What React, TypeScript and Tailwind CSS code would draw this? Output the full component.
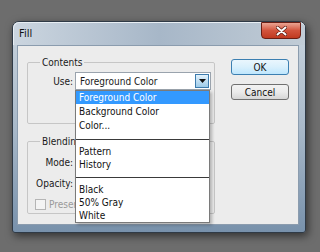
import React from "react";

const font = "font-['DejaVu_Sans_Condensed','DejaVu_Sans','Liberation_Sans',sans-serif] font-stretch-condensed";

function Separator({ mt, h }: { mt: string; h: string }) {
  return (
    <div className={`${h} w-full`}>
      <div className={`${mt} h-px w-full bg-[#3a3a3a]`} />
    </div>
  );
}

export default function App() {
  const items1 = ["Background Color", "Color..."];
  return (
    <div className={`w-[320px] h-[252px] bg-[#6d6d6d] overflow-hidden pt-[21px] pl-[12px] ${font}`}>
      <div className="relative w-[294px] h-[212px] rounded-t-[7px] rounded-b-[3px] border border-[#2f3a46] bg-gradient-to-b from-[#c9d4de] via-[#a9b9c9] to-[#7891ab] shadow-[2px_3px_8px_rgba(0,0,0,0.55)] flex flex-col">
        {/* title bar */}
        <div className="h-[23px] flex items-start bg-gradient-to-r from-[#cbd5df] via-[#a7b7c8] to-[#c1ccd6] rounded-t-[6px] border-t border-l border-[#e8eef3]">
          <span className="ml-[5px] mt-[5px] text-[11px] leading-[12px] text-[#111]">Fill</span>
          <div className="ml-auto mr-[4px] -mt-px w-[40px] h-[17px] rounded-b-[4px] border border-[#6a1e14] bg-gradient-to-b from-[#e9a493] via-[#d2533c] to-[#c0391f] flex items-center justify-center">
            <svg width="11" height="10" viewBox="0 0 11 10">
              <path d="M1.5 1.5 L9.5 8.5 M9.5 1.5 L1.5 8.5" stroke="#5a1a10" strokeWidth="3.4" strokeLinecap="round" />
              <path d="M1.5 1.5 L9.5 8.5 M9.5 1.5 L1.5 8.5" stroke="#ffffff" strokeWidth="2" strokeLinecap="round" />
            </svg>
          </div>
        </div>
        {/* client area */}
        <div className="ml-[4px] w-[282px] h-[180px] bg-[#ececec] border border-[#8b9cae] flex pt-[10px] pl-[9px]">
          {/* left column */}
          <div className="w-[188px] flex flex-col">
            <fieldset className="h-[68px] border border-[#c6c6c6] rounded-[2px]">
              <legend className="ml-[12px] px-[2px] text-[10px] leading-[13px] text-[#1a1a1a]">Contents</legend>
              <div className="flex items-center mt-[3px] text-[10px] text-[#1a1a1a]">
                <span className="w-[45px] text-right">Use:</span>
                <div className="relative ml-[2px] w-[136px] h-[18px] border border-[#9aa3ad] bg-white flex items-center">
                  <span className="ml-[4px] leading-[13px]">Foreground Color</span>
                  <div className="ml-auto mr-px w-[14px] h-[14px] border border-[#3d7bad] bg-gradient-to-b from-[#e3f2fc] to-[#9dcbe9] flex items-center justify-center">
                    <svg width="7" height="4" viewBox="0 0 7 4">
                      <path d="M0 0 H7 L3.5 4 Z" fill="#111" />
                    </svg>
                  </div>
                  {/* dropdown list */}
                  <div className="absolute left-[-1px] top-[17px] z-10 w-[135px] h-[133px] border border-[#7a7a7a] bg-white shadow-[2px_2px_3px_rgba(0,0,0,0.25)] flex flex-col text-[10px] text-[#111]">
                    <div className="h-[13px] bg-[#3399ff] text-white pl-[3px] leading-[13px]">Foreground Color</div>
                    {items1.map((t) => (
                      <div key={t} className="h-[13px] pl-[3px] leading-[13px] mt-px">{t}</div>
                    ))}
                    <Separator h="h-[15px]" mt="mt-[7px]" />
                    <div className="h-[13px] pl-[3px] leading-[13px]">Pattern</div>
                    <div className="h-[13px] pl-[3px] leading-[13px]">History</div>
                    <Separator h="h-[13px]" mt="mt-[6px]" />
                    <div className="h-[13px] pl-[3px] leading-[13px]">Black</div>
                    <div className="h-[13px] pl-[3px] leading-[13px]">50% Gray</div>
                    <div className="h-[13px] pl-[3px] leading-[13px]">White</div>
                  </div>
                </div>
              </div>
            </fieldset>
            <fieldset className="mt-[11px] h-[79px] border border-[#c6c6c6] rounded-[2px]">
              <legend className="ml-[12px] px-[2px] text-[10px] leading-[13px] text-[#1a1a1a] w-[35px] overflow-hidden whitespace-nowrap">Blending</legend>
              <div className="flex flex-col text-[10px] text-[#1a1a1a]">
                <div className="mt-[7px] h-[14px] flex items-center">
                  <span className="w-[45px] text-right">Mode:</span>
                </div>
                <div className="mt-[7px] h-[14px] flex items-center">
                  <span className="w-[45px] text-right">Opacity:</span>
                </div>
                <div className="mt-[7px] h-[14px] flex items-center">
                  <div className="ml-[7px] w-[11px] h-[11px] border border-[#b5b5b5] bg-[#f4f4f4]" />
                  <span className="ml-[3px] w-[26px] overflow-hidden whitespace-nowrap text-[#9a9a9a]">Preserve Transparency</span>
                </div>
              </div>
            </fieldset>
          </div>
          {/* right column */}
          <div className="ml-[16px] mt-[3px] flex flex-col gap-[9px] text-[10px] text-[#111]">
            <div className="w-[58px] h-[16px] rounded-[3px] border border-[#3c7fb1] bg-gradient-to-b from-[#eaf6fd] via-[#d9f0fc] to-[#bee6fd] flex items-center justify-center">OK</div>
            <div className="w-[58px] h-[16px] rounded-[3px] border border-[#707070] bg-gradient-to-b from-[#f2f2f2] via-[#ebebeb] to-[#d6d6d6] flex items-center justify-center">Cancel</div>
          </div>
        </div>
      </div>
    </div>
  );
}
